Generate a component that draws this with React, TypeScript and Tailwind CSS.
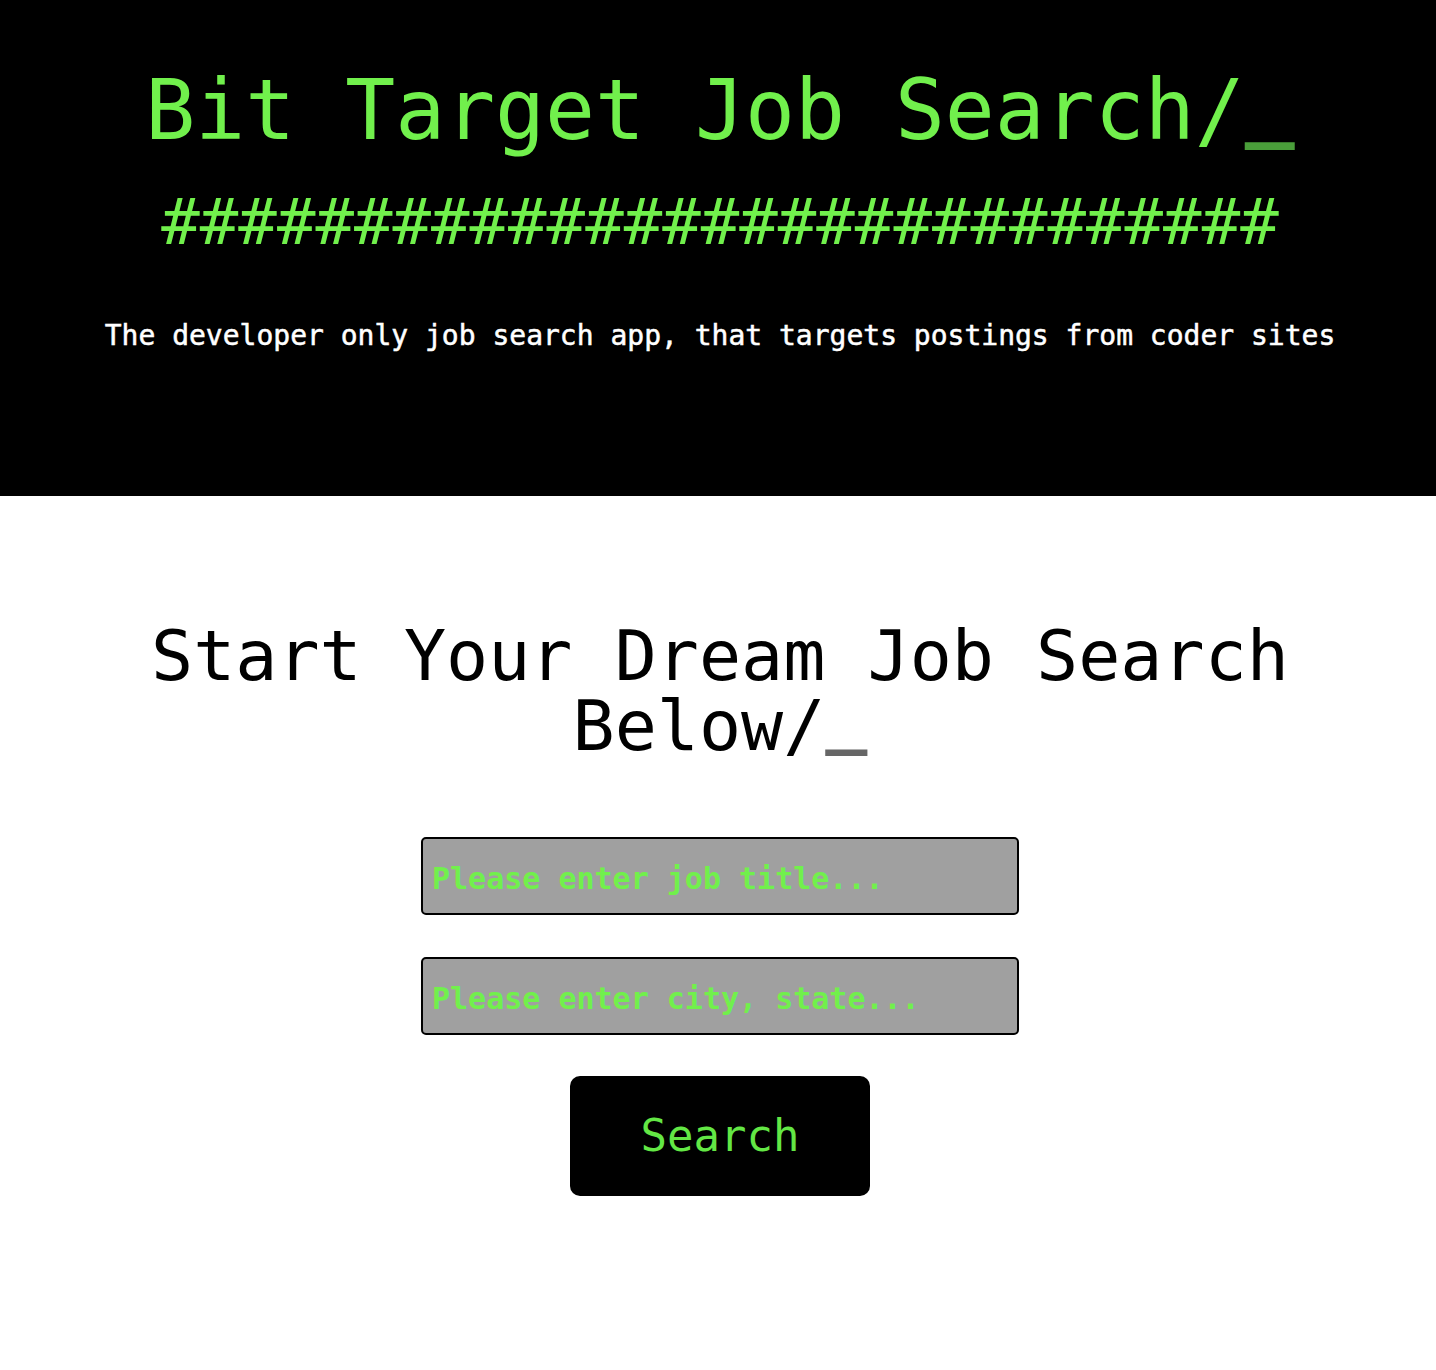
import React from "react";

const mono = "font-['DejaVu_Sans_Mono',monospace]";

export default function App() {
  return (
    <div className={`min-h-screen bg-white ${mono}`}>
      {/* Header */}
      <header className="bg-black pt-[69px] pb-[146px] pl-1 text-center">
        <h1 className="text-[83px] leading-none text-[#71f04c]">
          Bit Target Job Search/
          <span className="relative -top-[9px] text-[#4a9e3a] font-bold">_</span>
        </h1>
        <p className="mt-[38px] text-[64px] leading-none text-[#71f04c]">
          #############################
        </p>
        <p className="mt-[68px] text-[28px] leading-none text-white [-webkit-text-stroke:0.5px_white]">
          The developer only job search app, that targets postings from coder sites
        </p>
      </header>

      {/* Search */}
      <section className="pt-[125px] pb-40 pl-1 flex flex-col items-center">
        <h2 className="text-[70px] leading-none text-black text-center">
          Start Your Dream Job Search Below/
          <span className="relative -top-[10px] text-[#666666] font-bold">_</span>
        </h2>
        <form className="mt-[76px] flex flex-col items-center gap-[42px]">
          <input
            type="text"
            placeholder="Please enter job title..."
            className="w-[598px] h-[78px] px-[9px] pt-[4px] bg-[#a0a0a0] border-2 border-black rounded-[5px] text-[30px] font-bold text-[#71f04c] placeholder:text-[#71f04c] outline-none"
          />
          <input
            type="text"
            placeholder="Please enter city, state..."
            className="w-[598px] h-[78px] px-[9px] pt-[4px] bg-[#a0a0a0] border-2 border-black rounded-[5px] text-[30px] font-bold text-[#71f04c] placeholder:text-[#71f04c] outline-none"
          />
        </form>
        <button className="mt-[41px] w-[300px] h-[120px] bg-black rounded-[10px] text-[44px] text-[#63e745]">
          Search
        </button>
      </section>
    </div>
  );
}
